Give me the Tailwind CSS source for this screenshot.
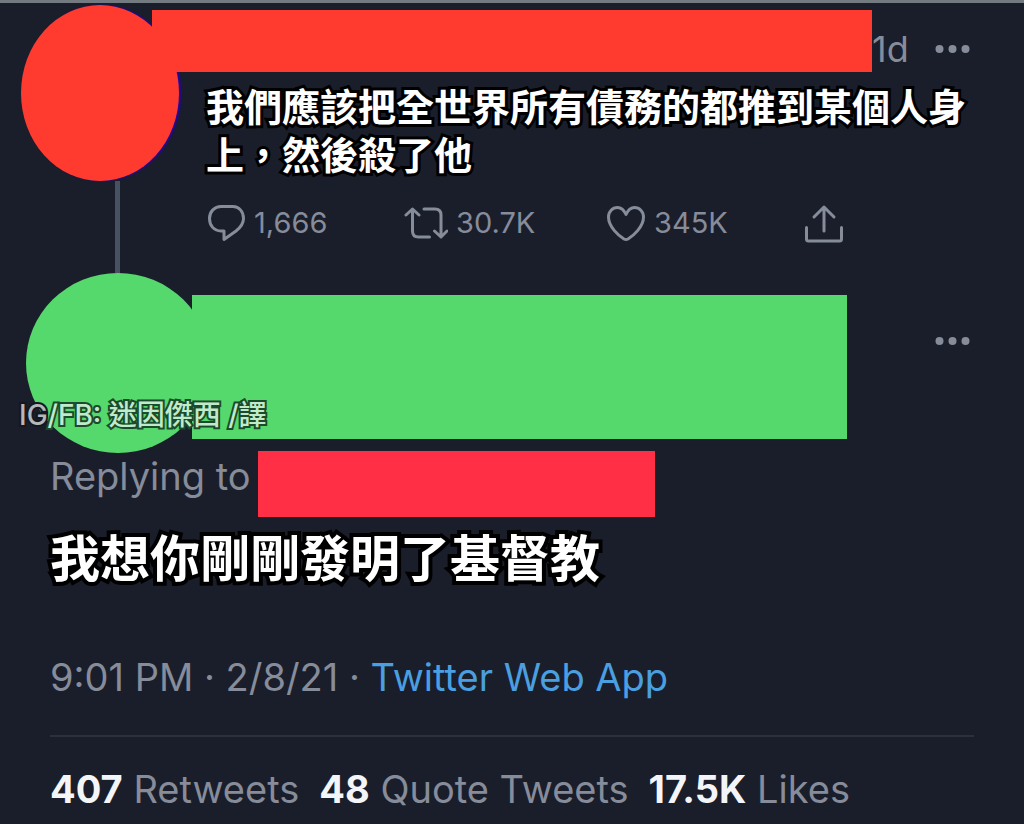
<!DOCTYPE html>
<html lang="zh-Hant">
<head>
<meta charset="utf-8">
<meta name="viewport" content="width=device-width, initial-scale=1">
<title>Thread</title>
<script src="https://cdn.jsdelivr.net/npm/@tailwindcss/browser@4"></script>
</head>
<body class="bg-[#1a1e2a]">
<main class="relative min-h-screen overflow-hidden border-t-3 border-[#737a80] bg-[#1a1e2a] font-['Inter','Noto_Sans_CJK_TC',sans-serif] text-[#868c9a]">

  <article class="flex">
    <!-- Avatar and thread line -->
    <div class="flex w-[206px] shrink-0 flex-col pl-[21px] pt-[2px]">
      <div class="h-[176px] w-[158px] rounded-[50%] bg-[#ff3b30] shadow-[2px_0px_2px_#2404a8]"></div>
      <div class="ml-[94px] w-[5px] flex-1 bg-[#465162]"></div>
    </div>
    <div class="min-w-0 flex-1 pb-[30px] pt-[6px]">
      <header class="flex items-center pr-[54px]">
        <div class="-ml-[54px] h-[62px] flex-1 bg-[#ff3b30]"></div>
        <time class="w-[63px] pt-4 text-[36px] leading-[48px]">1d</time>
        <button type="button" aria-label="More" class="mt-4 block">
          <svg class="h-[10px] w-[35px]" viewBox="0 0 35 10" fill="currentColor"><circle cx="4.500" cy="5" r="4"/><circle cx="17.500" cy="5" r="4"/><circle cx="30.500" cy="5" r="4"/></svg>
        </button>
      </header>
      <p class="mt-[10px] pr-14 text-[38px] font-bold leading-[48px] text-white [-webkit-text-stroke:6px_#000] [paint-order:stroke_fill] [stroke-linejoin:round]">我們應該把全世界所有債務的都推到某個人身上，然後殺了他</p>
      <div class="mt-6 flex h-10 items-center text-[29px] leading-10">
        <button type="button" class="flex w-[198px] items-center gap-2">
          <svg class="h-10 w-10" viewBox="0 0 40 40" fill="none" stroke="currentColor" stroke-width="3" stroke-linejoin="round"><path d="M15 3.500h12c6 0 10.500 5 10.500 12 0 5-3 9-7.500 12.500L18 36.500v-8.500h-3C8 28 3.500 22.500 3.500 15.500S8.500 3.500 15 3.500Z"/></svg>
          <span>1,666</span>
        </button>
        <button type="button" class="flex w-[202px] items-center gap-2">
          <svg class="h-10 w-[44px]" viewBox="0 0 44 40" fill="none" stroke="currentColor" stroke-width="3" stroke-linecap="round" stroke-linejoin="round"><path d="M2 12 8.500 6 15 12M8.500 6v22c0 4 2 6 6 6h11M20 6h11c4 0 6 2 6 6v22M30.500 28l6.500 6 6-6"/></svg>
          <span>30.7K</span>
        </button>
        <button type="button" class="flex w-[198px] items-center gap-2">
          <svg class="h-10 w-10" viewBox="0 0 40 40" fill="none" stroke="currentColor" stroke-width="3" stroke-linejoin="round"><path d="M20 11.500C18 7 15 4.500 11.500 4.500c-5 0-9 4-9 9.500C2.500 24 13 33 18 36q2 1 4 0C27 33 37.500 24 37.500 14c0-5.500-4-9.500-9-9.500-3.500 0-6.500 2.500-8.500 7Z"/></svg>
          <span>345K</span>
        </button>
        <button type="button" aria-label="Share">
          <svg class="h-10 w-10" viewBox="0 0 40 40" fill="none" stroke="currentColor" stroke-width="3" stroke-linecap="round" stroke-linejoin="round"><path d="M20 28V4M10 14 20 4l10 10M2.500 24.500V36q0 2 2 2h31q2 0 2-2V24.500"/></svg>
        </button>
      </div>
    </div>
  </article>

  <article>
    <header class="relative flex items-start pl-[26px] pr-[54px]">
      <div class="h-[180px] w-[184px] shrink-0 rounded-[50%] bg-[#55d86c]"></div>
      <div class="-ml-[18px] mt-[22px] h-[144px] flex-1 bg-[#55d86c]"></div>
      <button type="button" aria-label="More" class="ml-[88px] mt-[63px] block">
        <svg class="h-[10px] w-[35px]" viewBox="0 0 35 10" fill="currentColor"><circle cx="4.500" cy="5" r="4"/><circle cx="17.500" cy="5" r="4"/><circle cx="30.500" cy="5" r="4"/></svg>
      </button>
      <!-- Translator credit laid over the avatar -->
      <p class="absolute left-[19px] top-[124px] whitespace-nowrap text-[28px] font-medium leading-9 text-[#c0ebca] [-webkit-text-stroke:4px_#1c4a2c] [paint-order:stroke_fill] [stroke-linejoin:round]"><span class="text-[#b4b8bb] [-webkit-text-stroke:4px_#14171f]">IG</span>/FB: 迷因傑西 /譯</p>
    </header>

    <div class="px-[50px]">
      <div class="-mt-[2px] flex items-start">
        <p class="w-[208px] shrink-0 text-[38px] leading-[50px]">Replying to</p>
        <div class="h-[66px] w-[397px] bg-[#ff3045]"></div>
      </div>
      <p class="mt-3 text-[50px] font-bold leading-[60px] text-white [-webkit-text-stroke:8px_#000] [paint-order:stroke_fill] [stroke-linejoin:round]">我想你剛剛發明了基督教</p>
      <p class="mt-16 text-[38px] leading-[48px]"><time>9:01 PM · 2/8/21</time> · <a href="#" class="text-[#4a9fe0]">Twitter Web App</a></p>
      <div class="mt-[34px] flex gap-5 border-t-2 border-[#2c303c] pt-7 text-[38px] leading-[48px]">
        <a href="#"><strong class="font-bold text-[#f4f5f8]">407</strong> Retweets</a>
        <a href="#"><strong class="font-bold text-[#f4f5f8]">48</strong> Quote Tweets</a>
        <a href="#"><strong class="font-bold text-[#f4f5f8]">17.5K</strong> Likes</a>
      </div>
    </div>
  </article>
</main>
</body>
</html>
